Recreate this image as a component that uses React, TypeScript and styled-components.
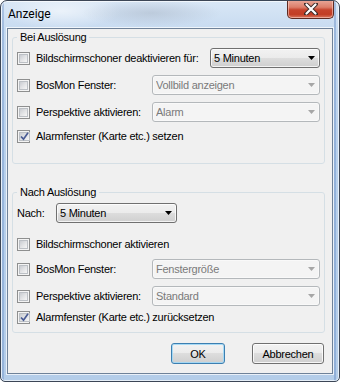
import React from "react";
import styled, { createGlobalStyle } from "styled-components";

const Global = createGlobalStyle`
  html, body { margin: 0; padding: 0; background: #ffffff; }
  body {
    font-family: "Liberation Sans", Arial, sans-serif;
    font-size: 11px;
    letter-spacing: -0.25px;
    color: #000;
  }
`;

const Window = styled.div`
  width: 340px;
  height: 382px;
  box-sizing: border-box;
  border: 1px solid #3c4656;
  border-radius: 7px 7px 5px 5px;
  background:
    linear-gradient(90deg, transparent 1px, rgba(90, 130, 190, 0.35) 1px, rgba(90, 130, 190, 0.35) 3px, transparent 3px,
      transparent calc(100% - 5px), rgba(90, 130, 190, 0.4) calc(100% - 5px), rgba(90, 130, 190, 0.4) calc(100% - 3px), transparent calc(100% - 3px)),
    radial-gradient(ellipse 70px 14px at 150px 12px, rgba(150, 160, 176, 0.35), transparent),
    radial-gradient(ellipse 60px 18px at 60px 10px, rgba(255, 255, 255, 0.55), transparent),
    linear-gradient(180deg, #d9e7f6 0%, #c6daf0 8%, #b9d1ec 40%, #b4cde9 100%);
  box-shadow: inset 0 0 0 1px rgba(255, 255, 255, 0.65);
  display: flex;
  flex-direction: column;
  overflow: hidden;
`;

const TitleBar = styled.div`
  height: 27px;
  flex: none;
  display: flex;
  align-items: flex-start;
  padding-left: 7px;
`;

const Title = styled.span`
  font-family: Roboto, "Noto Sans", sans-serif;
  font-size: 12px;
  letter-spacing: 0;
  line-height: 15px;
  padding-top: 6px;
  color: #000;
`;

const CloseButton = styled.div`
  margin-left: auto;
  margin-right: 5px;
  margin-top: -1px;
  width: 47px;
  height: 19px;
  box-sizing: border-box;
  border: 1px solid #5d2a22;
  border-top: none;
  border-radius: 0 0 5px 5px;
  background: linear-gradient(180deg, #e9a99a 0%, #dc7e6a 40%, #c6432c 55%, #c23d24 80%, #d8775f 100%);
  box-shadow: inset 0 0 0 1px rgba(255, 215, 205, 0.55);
  display: flex;
  align-items: center;
  justify-content: center;
`;

const Client = styled.div`
  flex: 1;
  margin: 0 6px 7px 6px;
  border: 1px solid #6f8299;
  box-shadow: 0 0 0 1px rgba(255, 255, 255, 0.7);
  background: #f0f0f0;
  display: flex;
  flex-direction: column;
`;

const Group = styled.fieldset<{ $mt: number; $pb: number }>`
  margin: ${(p) => p.$mt}px 7px 0 4px;
  padding: 3px 4px ${(p) => p.$pb}px 4px;
  border: 1px solid #d5dfe5;
  border-radius: 3px;
  min-width: 0;
  display: flex;
  flex-direction: column;
`;

const Legend = styled.legend`
  padding: 0 3px;
  line-height: 15px;
  color: #000;
`;

const Row = styled.div<{ $h: number; $mt: number }>`
  display: flex;
  align-items: center;
  height: ${(p) => p.$h}px;
  margin-top: ${(p) => p.$mt}px;
`;

const CheckLabel = styled.label`
  display: flex;
  align-items: center;
  gap: 6px;
  white-space: nowrap;
  line-height: 15px;
`;

const Box = styled.span`
  width: 13px;
  height: 13px;
  box-sizing: border-box;
  flex: none;
  border: 1px solid #8e8f8f;
  background: #f4f4f4;
  padding: 1px;
  display: flex;
`;

const BoxInner = styled.span`
  flex: 1;
  box-sizing: border-box;
  border: 1px solid #bcc0c5;
  background: linear-gradient(135deg, #c9ccd1 0%, #e2e3e5 50%, #f6f6f6 100%);
  display: flex;
  align-items: center;
  justify-content: center;
`;

const Text = styled.span<{ $w?: number }>`
  white-space: nowrap;
  line-height: 15px;
  width: ${(p) => (p.$w ? `${p.$w}px` : "auto")};
  flex: none;
`;

const Combo = styled.div<{ $w: number; $disabled?: boolean; $push?: boolean }>`
  width: ${(p) => p.$w}px;
  height: 20px;
  box-sizing: border-box;
  flex: none;
  margin-left: ${(p) => (p.$push ? "auto" : "0")};
  border: 1px solid ${(p) => (p.$disabled ? "#b4b8bb" : "#707070")};
  border-radius: 3px;
  background: ${(p) =>
    p.$disabled
      ? "#f4f4f4"
      : "linear-gradient(180deg, #f2f2f2 0%, #ebebeb 50%, #dddddd 50%, #cfcfcf 100%)"};
  box-shadow: inset 0 0 0 1px ${(p) => (p.$disabled ? "#f9f9f9" : "rgba(255,255,255,0.75)")};
  color: ${(p) => (p.$disabled ? "#7a7a7a" : "#000")};
  display: flex;
  align-items: center;
  padding: 0 4px 0 3px;
  line-height: 15px;
  white-space: nowrap;
`;

const ComboText = styled.span`
  flex: 1;
  overflow: hidden;
`;

const ButtonRow = styled.div`
  display: flex;
  justify-content: flex-end;
  gap: 27px;
  margin-top: 10px;
  padding-right: 8px;
`;

const Button = styled.button<{ $w: number; $default?: boolean }>`
  width: ${(p) => p.$w}px;
  height: 21px;
  box-sizing: border-box;
  padding: 0;
  font: inherit;
  letter-spacing: inherit;
  color: #000;
  border: 1px solid ${(p) => (p.$default ? "#3c7fb1" : "#707070")};
  border-radius: 3px;
  background: linear-gradient(180deg, #f2f2f2 0%, #ebebeb 50%, #dddddd 50%, #cfcfcf 100%);
  box-shadow: inset 0 0 0 1px ${(p) => (p.$default ? "rgba(160, 215, 245, 0.9)" : "rgba(255,255,255,0.8)")};
`;

const Arrow = ({ color }: { color: string }) => (
  <svg width="7" height="4" viewBox="0 0 7 4">
    <polygon points="0,0 7,0 3.5,4" fill={color} />
  </svg>
);

const Check = () => (
  <svg width="9" height="9" viewBox="0 0 9 9">
    <polyline points="1,4.5 3.5,7.2 8,0.8" fill="none" stroke="#4a5c94" strokeWidth="1.7" />
  </svg>
);

const CheckBox = ({ checked, label }: { checked?: boolean; label: string }) => (
  <CheckLabel>
    <Box>
      <BoxInner>{checked ? <Check /> : null}</BoxInner>
    </Box>
    <Text>{label}</Text>
  </CheckLabel>
);

const Select = ({ w, value, disabled, push }: { w: number; value: string; disabled?: boolean; push?: boolean }) => (
  <Combo $w={w} $disabled={disabled} $push={push}>
    <ComboText>{value}</ComboText>
    <Arrow color={disabled ? "#a6a6a6" : "#000"} />
  </Combo>
);

export default function App() {
  return (
    <>
      <Global />
      <Window>
        <TitleBar>
          <Title>Anzeige</Title>
          <CloseButton>
            <svg width="14" height="12" viewBox="0 0 14 12">
              <path d="M2 1 L12 11 M12 1 L2 11" stroke="#3b2a28" strokeWidth="4" strokeLinecap="round" />
              <path d="M2.5 1.5 L11.5 10.5 M11.5 1.5 L2.5 10.5" stroke="#ffffff" strokeWidth="2.2" strokeLinecap="round" />
            </svg>
          </CloseButton>
        </TitleBar>
        <Client>
          <Group $mt={1} $pb={20}>
            <Legend>Bei Auslösung</Legend>
            <Row $h={20} $mt={0}>
              <CheckBox label="Bildschirmschoner deaktivieren für:" />
              <Select w={110} value="5 Minuten" push />
            </Row>
            <Row $h={20} $mt={7}>
              <CheckBox label="BosMon Fenster:" />
              <Select w={168} value="Vollbild anzeigen" disabled push />
            </Row>
            <Row $h={20} $mt={7}>
              <CheckBox label="Perspektive aktivieren:" />
              <Select w={168} value="Alarm" disabled push />
            </Row>
            <Row $h={14} $mt={7}>
              <CheckBox checked label="Alarmfenster (Karte etc.) setzen" />
            </Row>
          </Group>
          <Group $mt={21} $pb={8}>
            <Legend>Nach Auslösung</Legend>
            <Row $h={20} $mt={0}>
              <Text $w={39}>Nach:</Text>
              <Select w={121} value="5 Minuten" />
            </Row>
            <Row $h={14} $mt={14}>
              <CheckBox label="Bildschirmschoner aktivieren" />
            </Row>
            <Row $h={20} $mt={8}>
              <CheckBox label="BosMon Fenster:" />
              <Select w={168} value="Fenstergröße" disabled push />
            </Row>
            <Row $h={20} $mt={7}>
              <CheckBox label="Perspektive aktivieren:" />
              <Select w={168} value="Standard" disabled push />
            </Row>
            <Row $h={14} $mt={4}>
              <CheckBox checked label="Alarmfenster (Karte etc.) zurücksetzen" />
            </Row>
          </Group>
          <ButtonRow>
            <Button $w={54} $default>OK</Button>
            <Button $w={72}>Abbrechen</Button>
          </ButtonRow>
        </Client>
      </Window>
    </>
  );
}
